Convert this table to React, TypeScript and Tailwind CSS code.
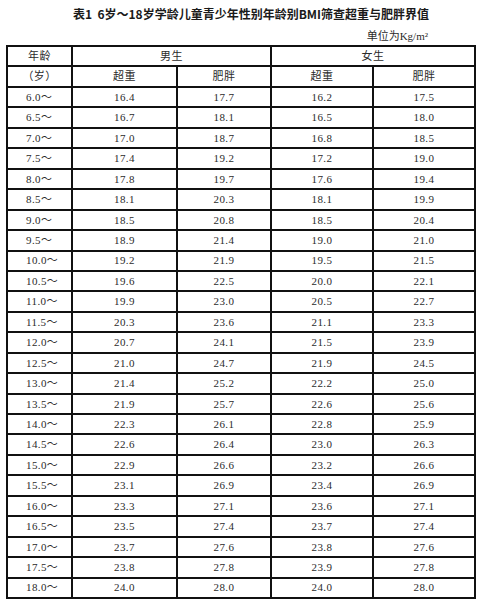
const rows: [string, string, string, string, string][] = [
  ['6.0～', '16.4', '17.7', '16.2', '17.5'],
  ['6.5～', '16.7', '18.1', '16.5', '18.0'],
  ['7.0～', '17.0', '18.7', '16.8', '18.5'],
  ['7.5～', '17.4', '19.2', '17.2', '19.0'],
  ['8.0～', '17.8', '19.7', '17.6', '19.4'],
  ['8.5～', '18.1', '20.3', '18.1', '19.9'],
  ['9.0～', '18.5', '20.8', '18.5', '20.4'],
  ['9.5～', '18.9', '21.4', '19.0', '21.0'],
  ['10.0～', '19.2', '21.9', '19.5', '21.5'],
  ['10.5～', '19.6', '22.5', '20.0', '22.1'],
  ['11.0～', '19.9', '23.0', '20.5', '22.7'],
  ['11.5～', '20.3', '23.6', '21.1', '23.3'],
  ['12.0～', '20.7', '24.1', '21.5', '23.9'],
  ['12.5～', '21.0', '24.7', '21.9', '24.5'],
  ['13.0～', '21.4', '25.2', '22.2', '25.0'],
  ['13.5～', '21.9', '25.7', '22.6', '25.6'],
  ['14.0～', '22.3', '26.1', '22.8', '25.9'],
  ['14.5～', '22.6', '26.4', '23.0', '26.3'],
  ['15.0～', '22.9', '26.6', '23.2', '26.6'],
  ['15.5～', '23.1', '26.9', '23.4', '26.9'],
  ['16.0～', '23.3', '27.1', '23.6', '27.1'],
  ['16.5～', '23.5', '27.4', '23.7', '27.4'],
  ['17.0～', '23.7', '27.6', '23.8', '27.6'],
  ['17.5～', '23.8', '27.8', '23.9', '27.8'],
  ['18.0～', '24.0', '28.0', '24.0', '28.0'],
];

const cell = 'border-2 border-[#111] p-0 align-middle';

export default function App() {
  return (
    <div className="w-[482px] h-[611px] bg-white text-[#2b2b2b] font-['Liberation_Serif','Noto_Sans_CJK_SC',serif]">
      <div className="h-[28px] flex items-center justify-center pl-[20px] font-['Noto_Sans_CJK_SC',sans-serif] font-bold text-[12px] text-[#1a1a1a]">
        表1&nbsp;&nbsp;6岁～18岁学龄儿童青少年性别年龄别BMI筛查超重与肥胖界值
      </div>
      <div className="h-[17px] flex items-center justify-end pr-[54px] text-[11px]">
        单位为Kg/m²
      </div>
      <table className="ml-[6px] w-[470px] table-fixed border-collapse text-[11px] tracking-[0.4px]">
        <colgroup>
          <col className="w-[65px]" />
          <col className="w-[105px]" />
          <col className="w-[94px]" />
          <col className="w-[102px]" />
          <col className="w-[102px]" />
        </colgroup>
        <thead>
          <tr className="h-[20px]">
            <td className={`${cell} text-center`}>年龄</td>
            <td colSpan={2} className={`${cell} text-center`}>男生</td>
            <td colSpan={2} className={`${cell} text-center`}>女生</td>
          </tr>
          <tr className="h-[21px]">
            <td className={`${cell} text-center`}>（岁）</td>
            <td className={`${cell} text-center`}>超重</td>
            <td className={`${cell} text-center`}>肥胖</td>
            <td className={`${cell} text-center`}>超重</td>
            <td className={`${cell} text-center`}>肥胖</td>
          </tr>
        </thead>
        <tbody>
          {rows.map((r) => (
            <tr key={r[0]} className="h-[20.45px]">
              <td className={`${cell} pl-[18px] text-left`}>{r[0]}</td>
              <td className={`${cell} text-center`}>{r[1]}</td>
              <td className={`${cell} text-center`}>{r[2]}</td>
              <td className={`${cell} text-center`}>{r[3]}</td>
              <td className={`${cell} text-center`}>{r[4]}</td>
            </tr>
          ))}
        </tbody>
      </table>
    </div>
  );
}
